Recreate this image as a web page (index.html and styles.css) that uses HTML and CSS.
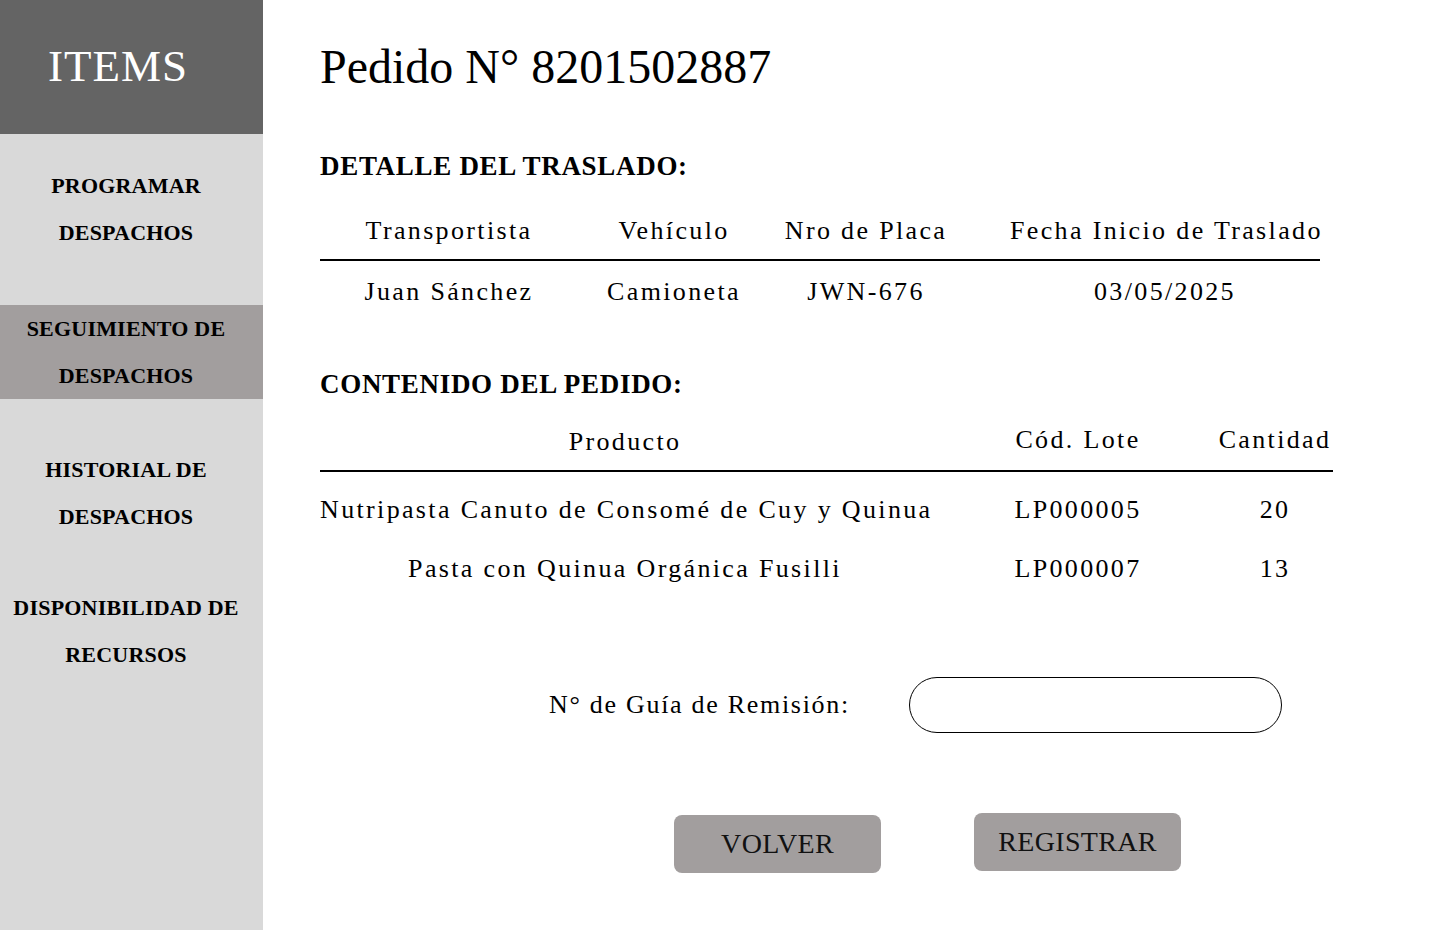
FILE: index.html
```html
<!DOCTYPE html>
<html lang="es">
<head>
<meta charset="utf-8">
<title>Pedido N° 8201502887</title>
<link rel="stylesheet" href="styles.css">
</head>
<body>
<div class="app">
  <aside class="sidebar">
    <div class="brand">ITEMS</div>
    <nav class="nav">
      <div class="nav-item">PROGRAMAR<br>DESPACHOS</div>
      <div class="nav-item active">SEGUIMIENTO DE<br>DESPACHOS</div>
      <div class="nav-item">HISTORIAL DE<br>DESPACHOS</div>
      <div class="nav-item">DISPONIBILIDAD DE<br>RECURSOS</div>
    </nav>
  </aside>
  <main class="main">
    <h1 class="title">Pedido N° 8201502887</h1>

    <h2 class="section">DETALLE DEL TRASLADO:</h2>
    <div class="detail">
      <div class="detail-row head">
        <div class="cell">Transportista</div>
        <div class="cell">Vehículo</div>
        <div class="cell">Nro de Placa</div>
        <div class="cell c4">Fecha Inicio de Traslado</div>
      </div>
      <div class="detail-row body">
        <div class="cell">Juan Sánchez</div>
        <div class="cell">Camioneta</div>
        <div class="cell">JWN-676</div>
        <div class="cell c4">03/05/2025</div>
      </div>
    </div>

    <h2 class="section second">CONTENIDO DEL PEDIDO:</h2>
    <div class="products">
      <div class="prod-row head">
        <div class="cell prod">Producto</div>
        <div class="cell lote up">Cód. Lote</div>
        <div class="cell qty up">Cantidad</div>
      </div>
      <div class="prod-row item">
        <div class="cell prod">Nutripasta Canuto de Consomé de Cuy y Quinua</div>
        <div class="cell lote">LP000005</div>
        <div class="cell qty">20</div>
      </div>
      <div class="prod-row item">
        <div class="cell prod">Pasta con Quinua Orgánica Fusilli</div>
        <div class="cell lote">LP000007</div>
        <div class="cell qty">13</div>
      </div>
    </div>

    <div class="guide">
      <label class="guide-label" for="guia">N° de Guía de Remisión:</label>
      <input class="guide-input" id="guia" type="text">
    </div>

    <div class="actions">
      <button class="btn back">VOLVER</button>
      <button class="btn">REGISTRAR</button>
    </div>
  </main>
</div>
</body>
</html>
```
FILE: styles.css
```css
* { box-sizing: border-box; }

html, body {
  margin: 0;
  padding: 0;
  background: #ffffff;
}

body {
  font-family: "Liberation Serif", "Times New Roman", serif;
  color: #000;
}

.app {
  display: flex;
  min-height: 930px;
}

/* Sidebar */
.sidebar {
  flex: 0 0 263px;
  background: #d9d9d9;
  display: flex;
  flex-direction: column;
}

.brand {
  height: 134px;
  background: #646464;
  color: #ffffff;
  font-size: 45px;
  letter-spacing: 1px;
  text-align: center;
  padding-right: 27px;
  line-height: 132px;
}

.nav {
  display: flex;
  flex-direction: column;
  gap: 47px;
  padding-top: 28px;
}

.nav-item {
  font-weight: bold;
  font-size: 22px;
  line-height: 47px;
  text-align: center;
  padding-right: 11px;
  letter-spacing: 0.2px;
}

.nav-item:nth-child(2) {
  margin-top: 2px;
}

.nav-item:nth-child(4) {
  margin-top: -3px;
}

.nav-item.active {
  background: #a29e9e;
}

/* Main */
.main {
  flex: 1;
  padding: 37px 0 0 57px;
}

.title {
  margin: 0;
  font-weight: normal;
  font-size: 48px;
  line-height: 60px;
  letter-spacing: 0;
}

.section {
  margin: 53px 0 0;
  font-size: 27px;
  line-height: 32px;
  font-weight: bold;
  letter-spacing: 0.7px;
}

.section.second {
  margin-top: 56px;
}

.cell {
  font-size: 26px;
  line-height: 40px;
  letter-spacing: 2.35px;
  text-align: center;
  white-space: nowrap;
}

/* Detail table */
.detail {
  width: 1000px;
  margin-top: 29px;
}

.detail-row {
  display: grid;
  grid-template-columns: 258px 192px 192px 358px;
}

.detail-row.head {
  height: 50px;
  border-bottom: 2px solid #000;
}

.detail-row.body {
  padding-top: 11px;
}

.detail .c4 {
  padding-left: 48px;
}

/* Products table */
.products {
  width: 1013px;
  margin-top: 22px;
}

.prod-row {
  display: grid;
  grid-template-columns: 610px 287px 116px;
}

.prod-row.head {
  height: 50px;
  border-bottom: 2px solid #000;
  margin-bottom: 18px;
}

.prod-row.head .up {
  margin-top: -2px;
}

.prod-row.item {
  padding-bottom: 19px;
}

.lote {
  padding-left: 9px;
}

/* Guide */
.guide {
  display: flex;
  align-items: center;
  gap: 57px;
  margin-top: 69px;
  padding-left: 227px;
}

.guide-label {
  flex: 0 0 305px;
  font-size: 26px;
  line-height: 40px;
  letter-spacing: 1.7px;
  text-align: center;
  white-space: nowrap;
}

.guide-input {
  width: 373px;
  height: 56px;
  border: 1px solid #000;
  border-radius: 28px;
  background: #fff;
  outline: none;
  padding: 0 24px;
  font: inherit;
}

/* Buttons */
.actions {
  display: flex;
  align-items: flex-start;
  gap: 93px;
  margin-top: 80px;
  padding-left: 354px;
}

.btn {
  width: 207px;
  height: 58px;
  background: #a29e9e;
  border: none;
  border-radius: 8px;
  font-family: "Liberation Serif", "Times New Roman", serif;
  font-size: 28px;
  line-height: 58px;
  color: #111;
  padding: 0;
  letter-spacing: 0.3px;
}

.btn.back {
  margin-top: 2px;
}
```
